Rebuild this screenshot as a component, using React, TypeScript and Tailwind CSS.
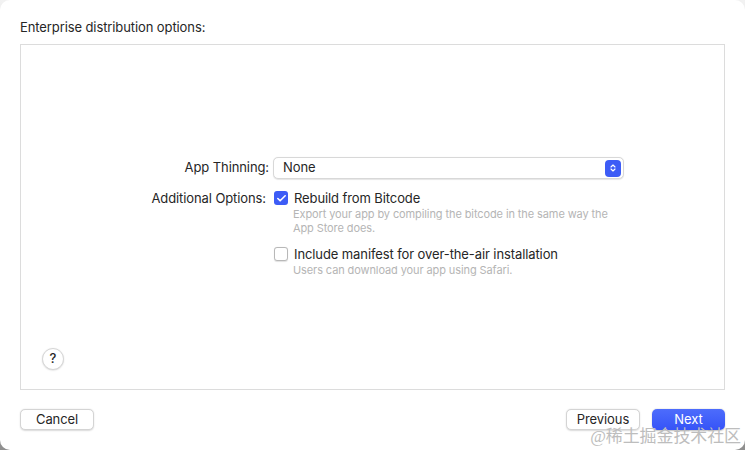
import { Check, ChevronDown, ChevronUp } from "lucide-react";

const font = { fontFamily: "Inter, 'Liberation Sans', sans-serif", letterSpacing: "-0.1px" };

const Checkbox = ({ checked }: { checked: boolean }) =>
  checked ? (
    <span className="flex h-[14px] w-[14px] shrink-0 items-center justify-center rounded-[3px] bg-[#3d5cf6]">
      <Check className="h-[11px] w-[11px] text-white" strokeWidth={3.5} />
    </span>
  ) : (
    <span className="h-[14px] w-[14px] shrink-0 rounded-[3px] border border-[#b8b8b8] bg-white shadow-[0_0.5px_1px_rgba(0,0,0,0.12)]" />
  );

const Option = ({
  checked,
  label,
  desc,
}: {
  checked: boolean;
  label: string;
  desc: string;
}) => (
  <div className="flex flex-col">
    <label className="flex items-center gap-[6px] text-[13px] leading-[16px] text-[#262626]">
      <Checkbox checked={checked} />
      {label}
    </label>
    <p className="mt-[1px] w-[345px] pl-[19px] text-[11px] leading-[14px] text-[#b5b5b5]">
      {desc}
    </p>
  </div>
);

const Button = ({ children, primary }: { children: string; primary?: boolean }) => (
  <button
    className={
      primary
        ? "h-[21px] w-[73px] rounded-[5px] bg-gradient-to-b from-[#4d6cfc] to-[#3653f7] text-[13px] text-white shadow-[0_0.5px_1.5px_rgba(0,0,0,0.25)]"
        : "h-[21px] w-[74px] rounded-[5px] border border-[#d4d4d4] bg-white text-[13px] text-[#262626] shadow-[0_0.5px_1.5px_rgba(0,0,0,0.15)]"
    }
  >
    {children}
  </button>
);

export default function App() {
  return (
    <div className="h-[450px] w-[745px] bg-gradient-to-b from-[#f2f2f2] to-[#8f8f8f]" style={font}>
      <div className="relative flex h-full w-full flex-col rounded-[10px] bg-white px-[20px]">
        <h2 className="pt-[19px] text-[13px] leading-[16px] text-[#262626]">
          Enterprise distribution options:
        </h2>

        <div className="mt-[9px] flex h-[346px] flex-col border border-[#dcdcdc]">
          <div className="mt-[112px] flex flex-col gap-[11px]">
            <div className="flex items-center">
              <span className="w-[248px] text-right text-[13px] text-[#262626]">App Thinning:</span>
              <div className="ml-[4px] flex h-[22px] w-[351px] items-center justify-between rounded-[5px] border border-[#d8d8d8] bg-white pl-[9px] pr-[2px] shadow-[0_0.5px_1px_rgba(0,0,0,0.1)]">
                <span className="text-[13px] text-[#262626]">None</span>
                <span className="flex h-[17px] w-[16px] flex-col items-center justify-center rounded-[4px] bg-[#3d5cf6]">
                  <ChevronUp className="-mb-[2px] h-[8px] w-[8px] text-white" strokeWidth={3.5} />
                  <ChevronDown className="-mt-[2px] h-[8px] w-[8px] text-white" strokeWidth={3.5} />
                </span>
              </div>
            </div>

            <div className="flex items-start">
              <span className="w-[245px] text-right text-[13px] leading-[16px] text-[#262626]">
                Additional Options:
              </span>
              <div className="ml-[8px] flex flex-col gap-[11px]">
                <Option
                  checked
                  label="Rebuild from Bitcode"
                  desc="Export your app by compiling the bitcode in the same way the App Store does."
                />
                <Option
                  checked={false}
                  label="Include manifest for over-the-air installation"
                  desc="Users can download your app using Safari."
                />
              </div>
            </div>
          </div>

          <div className="mt-auto mb-[19px] ml-[21px]">
            <button className="flex h-[22px] w-[22px] items-center justify-center rounded-full border border-[#d6d6d6] bg-white text-[13px] font-medium text-[#262626] shadow-[0_0.5px_1.5px_rgba(0,0,0,0.15)]">
              ?
            </button>
          </div>
        </div>

        <div className="mt-[19px] flex items-center">
          <Button>Cancel</Button>
          <div className="ml-auto flex gap-[12px]">
            <Button>Previous</Button>
            <Button primary>Next</Button>
          </div>
        </div>

        <span
          className="absolute bottom-[3px] right-[4px] text-[17px] leading-[20px] text-[#bdbdbd]"
          style={{ fontFamily: "'Liberation Serif', 'Noto Sans CJK SC', serif" }}
        >
          @稀土掘金技术社区
        </span>
      </div>
    </div>
  );
}
